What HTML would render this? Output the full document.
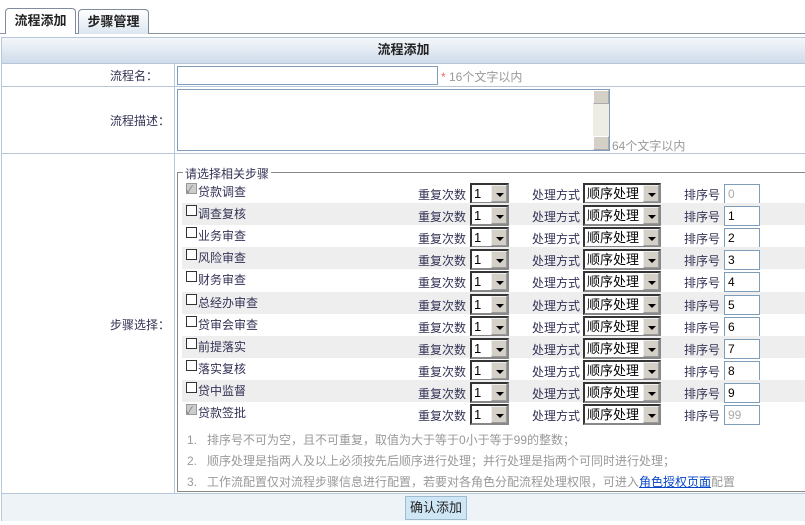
<!DOCTYPE html>
<html><head><meta charset="utf-8"><style>
*{margin:0;padding:0;box-sizing:border-box}
body{width:805px;height:525px;background:#fff;font-family:"Liberation Sans","Noto Sans CJK SC",sans-serif;font-size:12px;color:#333355;position:relative;overflow:hidden}
.a{position:absolute}
.tab{position:absolute;top:9px;height:25px;border:1px solid #7f8c9c;border-bottom:none;border-radius:4px 4px 0 0;font-weight:bold;font-size:13px;color:#222;text-align:center;line-height:23px}
.sel{position:absolute;height:21px;border:2px inset #888;background:#fff;font-size:13px;line-height:17px;padding-left:2px;color:#000}
.sel i{position:absolute;right:0;top:0;width:16px;height:17px;background:#d4d0c8;border:1px outset #eee}
.sel i:after{content:"";position:absolute;left:4px;top:7px;border:4px solid transparent;border-top:4px solid #000;border-bottom:0}
.num{position:absolute;left:724px;width:36px;height:20px;border:1px solid #7f9db9;background:#fff;font-size:12px;line-height:18px;padding-left:3px;color:#000}
.row{position:absolute;left:182px;width:623px;height:22px}
.g{background:#eeeeee}
</style></head><body>
<div class="a" style="left:0;top:33px;width:805px;height:1px;background:#8a96a4"></div>
<div class="tab" style="left:5px;width:71px;height:26px;background:#fff;top:8px">流程添加</div>
<div class="tab" style="left:78px;width:71px;background:linear-gradient(#fff,#dce6f0)">步骤管理</div>
<div class="a" style="left:1px;top:37px;width:804px;height:484px;border:1px solid #b6c8d8;border-right:none"></div>
<div class="a" style="left:2px;top:38px;width:803px;height:26px;background:linear-gradient(#f4f7fa,#cfdceb);border-bottom:1px solid #b6c8d8;text-align:center;font-weight:bold;font-size:13px;line-height:24px;color:#222">流程添加</div>
<div class="a" style="left:174px;top:64px;width:1px;height:430px;background:#b6c8d8"></div>
<div class="a" style="left:2px;top:86px;width:803px;height:1px;background:#b6c8d8"></div>
<div class="a" style="left:2px;top:153px;width:803px;height:1px;background:#b6c8d8"></div>
<div class="a" style="left:2px;top:493px;width:803px;height:28px;background:#eef3f8;border-top:1px solid #b6c8d8"></div>
<div class="a" style="left:110px;top:67px;font-size:12px">流程名：</div>
<div class="a" style="left:177px;top:66px;width:261px;height:19px;border:1px solid #7f9db9"></div>
<div class="a" style="left:441px;top:68px;color:#999"><span style="color:#e66">*</span> 16个文字以内</div>
<div class="a" style="left:110px;top:112px">流程描述：</div>
<div class="a" style="left:177px;top:89px;width:433px;height:62px;border:1px solid #7f9db9"></div>
<div class="a" style="left:593px;top:90px;width:16px;height:60px;background:#eeede5"></div>
<div class="a" style="left:593px;top:90px;width:16px;height:14px;background:#d4d0c8;border:1px outset #fff"></div>
<div class="a" style="left:593px;top:136px;width:16px;height:14px;background:#d4d0c8;border:1px outset #fff"></div>
<div class="a" style="left:612px;top:137px;color:#999">64个文字以内</div>
<div class="a" style="left:110px;top:316px">步骤选择：</div>
<div class="a" style="left:177px;top:172px;width:640px;height:320px;border:1px solid #888"></div>
<div class="a" style="left:183px;top:165px;background:#fff;padding:0 2px">请选择相关步骤</div>
<div id="rows"></div>
<script>
var n=["贷款调查","调查复核","业务审查","风险审查","财务审查","总经办审查","贷审会审查","前提落实","落实复核","贷中监督","贷款签批"];
var h="";
for(var i=0;i<11;i++){var y=181+i*22.1;var dis=(i==0||i==10);
h+='<div class="row'+(i%2?' g':'')+'" style="top:'+(y)+'px"></div>';
h+='<div class="a" style="left:186px;top:'+(y+2)+'px;width:11px;height:11px;border:1px solid '+(dis?'#999;background:#ccc':'#333;background:#fff')+'"></div>';
if(dis)h+='<div class="a" style="left:186px;top:'+(y)+'px;font-size:10px;color:#777">✓</div>';
h+='<div class="a" style="left:198px;top:'+(y+2)+'px">'+n[i]+'</div>';
h+='<div class="a" style="left:418px;top:'+(y+5)+'px">重复次数</div>';
h+='<div class="sel" style="left:470px;top:'+(y+2)+'px;width:39px">1<i></i></div>';
h+='<div class="a" style="left:532px;top:'+(y+5)+'px">处理方式</div>';
h+='<div class="sel" style="left:583px;top:'+(y+2)+'px;width:78px">顺序处理<i></i></div>';
h+='<div class="a" style="left:684px;top:'+(y+5)+'px">排序号</div>';
h+='<div class="num" style="top:'+(y+3)+'px;'+(dis?'color:#aaa':'')+'">'+(i==10?99:i)+'</div>';}
document.getElementById("rows").innerHTML=h;
</script>
<div class="a" style="left:187px;top:430px;color:#999;line-height:21px">
<div>1.&nbsp;&nbsp;&nbsp;排序号不可为空，且不可重复，取值为大于等于0小于等于99的整数；</div>
<div>2.&nbsp;&nbsp;&nbsp;顺序处理是指两人及以上必须按先后顺序进行处理；并行处理是指两个可同时进行处理；</div>
<div>3.&nbsp;&nbsp;&nbsp;工作流配置仅对流程步骤信息进行配置，若要对各角色分配流程处理权限，可进入<span style="color:#0645c8;text-decoration:underline">角色授权页面</span>配置</div>
</div>
<div class="a" style="left:405px;top:496px;width:62px;height:24px;background:#cfe6f5;border:1px solid #9fb9d0;font-size:13px;line-height:22px;text-align:center;color:#222">确认添加</div>
</body></html>
